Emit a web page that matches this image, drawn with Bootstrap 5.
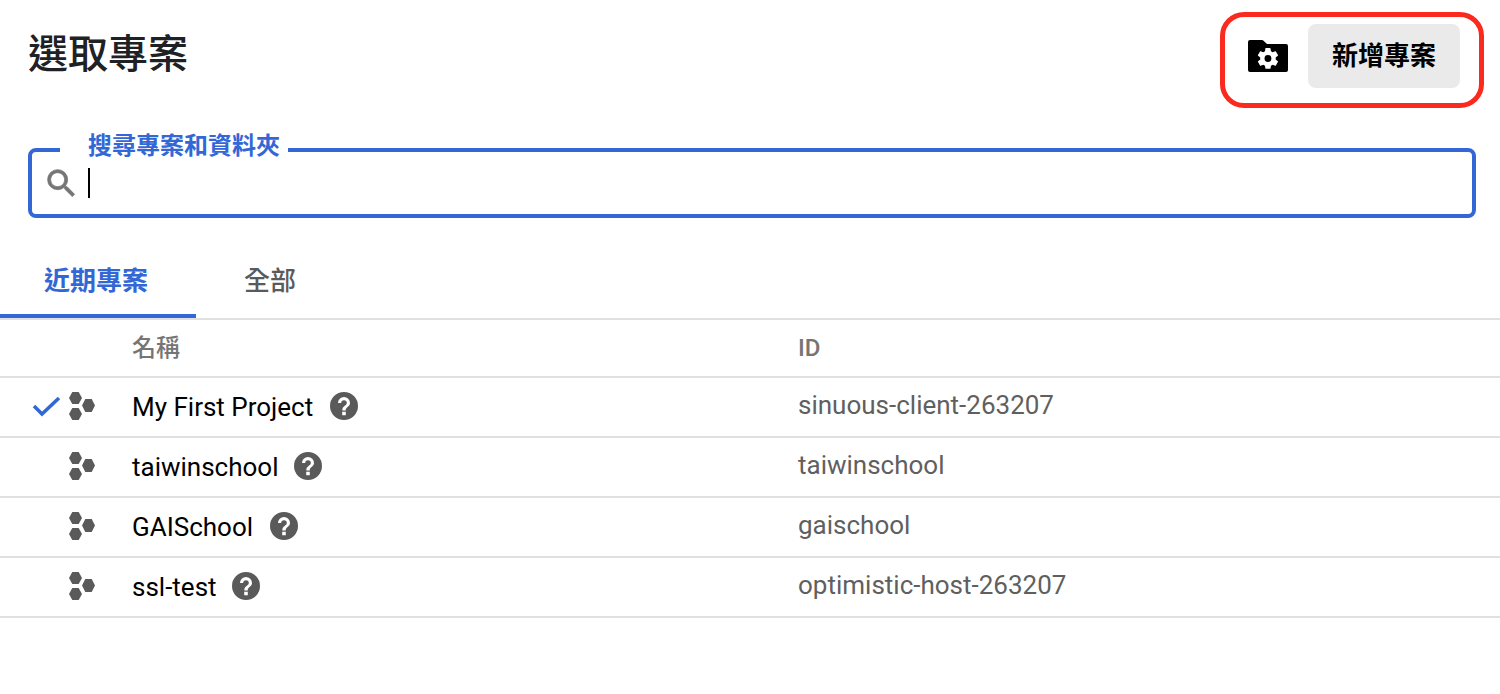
<!DOCTYPE html>
<html lang="zh-Hant">
<head>
<meta charset="utf-8">
<title>選取專案</title>
<link href="https://cdn.jsdelivr.net/npm/bootstrap@5.3.0/dist/css/bootstrap.min.css" rel="stylesheet">
<style>
body{font-family:Roboto,"Noto Sans CJK TC",sans-serif;background:#fff;color:#000;height:694px;overflow:hidden}
.top-bar{padding:24px 40px 0 28px;height:88px}
.pick-title{font-size:40px;font-weight:500;color:#202124;margin:0;line-height:62px}
.tools-wrap{position:relative;gap:20px}
.annot{position:absolute;left:-28px;top:-12px;width:264px;height:96px;border:5px solid #fb2a1f;border-radius:24px;pointer-events:none}
.new-btn{width:152px;height:64px;border-radius:8px;background:#eaeaea;border:0;font-size:26px;font-weight:700;color:#000;padding:0;line-height:1}
.new-btn:hover{background:#e2e2e2;color:#000}
.search-box{position:relative;margin:60px 24px 0 28px;height:70px;border:4px solid #3367d6;border-radius:8px;padding-left:11px;gap:8px}
.search-label{position:absolute;left:28px;top:-22px;background:#fff;padding:0 8px 0 28px;font-size:24px;line-height:32px;font-weight:700;color:#3367d6;height:28px}
.caret-bar{width:2px;height:30px;background:#000}
.tab-strip{margin-top:30px;height:72px;border-bottom:2px solid #e0e0e0}
.tab-item{height:70px;font-size:26px;font-weight:500;color:#5a5a5a;line-height:1}
.tab-on{width:196px;color:#3367d6;font-weight:700;border-bottom:4px solid #3367d6;padding-right:4px}
.tab-off{width:148px;padding-bottom:4px}
.proj-row{height:60px;border-bottom:2px solid #e0e0e0}
.head-row{height:58px;font-size:24px;font-weight:500;color:#757575}
.col-mark{width:132px;padding-left:32px;padding-bottom:2px;flex:none;gap:8px}
.col-name{width:666px;flex:none;font-size:26px;color:#000;gap:17px}
.col-name.tight-gap{gap:15px}
.col-id{font-size:26px;color:#5f5f5f;padding-bottom:3px}
.head-row .col-name,.head-row .col-id{font-size:24px;color:#757575;padding:0}
.mark-slot{width:29px;flex:none}
.help-glyph{margin-bottom:2px}
</style>
</head>
<body>
<div class="top-bar d-flex justify-content-between">
  <h1 class="pick-title">選取專案</h1>
  <div class="tools-wrap d-flex align-items-center align-self-start">
    <svg width="40" height="32" viewBox="0 0 40 32" aria-hidden="true"><path fill="#000" d="M2 0h12a2 2 0 0 1 1.500.7L19 4h19a2 2 0 0 1 2 2v24a2 2 0 0 1-2 2H2a2 2 0 0 1-2-2V2a2 2 0 0 1 2-2z"/><g transform="translate(7 5.500) scale(1.08)"><path fill="#fff" d="M19.140 12.940c.04-.3.06-.61.06-.94 0-.32-.02-.64-.07-.94l2.030-1.580a.49.490 0 0 0 .12-.61l-1.920-3.320a.488.488 0 0 0-.59-.22l-2.390.96c-.5-.38-1.030-.7-1.620-.94l-.36-2.540a.484.484 0 0 0-.48-.41h-3.840c-.24 0-.43.170-.47.410l-.36 2.540c-.59.24-1.130.57-1.620.94l-2.390-.96c-.22-.08-.47 0-.59.22L2.740 8.870c-.12.210-.08.470.12.610l2.030 1.580c-.05.3-.09.630-.09.940s.02.640.07.940l-2.030 1.580a.49.490 0 0 0-.12.610l1.920 3.320c.12.220.37.290.59.220l2.390-.96c.5.38 1.030.7 1.620.94l.36 2.540c.05.240.24.410.48.410h3.840c.24 0 .44-.17.47-.41l.36-2.540c.59-.24 1.130-.56 1.620-.94l2.390.96c.22.080.47 0 .59-.22l1.920-3.320c.12-.22.07-.47-.12-.61l-2.010-1.580zM12 15.200a3.200 3.200 0 1 1 0-6.400 3.200 3.200 0 0 1 0 6.400z"/></g></svg>
    <button type="button" class="btn new-btn">新增專案</button>
    <div class="annot"></div>
  </div>
</div>
<div class="search-box d-flex align-items-center">
  <span class="search-label">搜尋專案和資料夾</span>
  <svg width="37" height="37" viewBox="0 0 24 24" aria-hidden="true"><path fill="#757575" stroke="#757575" stroke-width=".5" d="M15.500 14h-.79l-.28-.27A6.470 6.470 0 0 0 16 9.500 6.500 6.500 0 1 0 9.500 16c1.610 0 3.090-.59 4.230-1.570l.27.28v.79l5 4.990L20.490 19l-4.990-5zm-6 0C7.010 14 5 11.990 5 9.500S7.010 5 9.500 5 14 7.010 14 9.500 11.990 14 9.500 14z"/></svg>
  <span class="caret-bar"></span>
</div>
<div class="tab-strip d-flex">
  <div class="tab-item tab-on d-flex align-items-center justify-content-center">近期專案</div>
  <div class="tab-item tab-off d-flex align-items-center justify-content-center">全部</div>
</div>
<div class="proj-row head-row d-flex align-items-center">
  <div class="col-mark"></div>
  <div class="col-name">名稱</div>
  <div class="col-id">ID</div>
</div>
<svg width="0" height="0" class="d-block" aria-hidden="true"><defs>
  <symbol id="hexes" viewBox="0 0 26 28"><path fill="#5a5a5a" d="M3.300 0h6.400L13 6l-3.300 6H3.300L0 6zM3.300 16h6.400l3.300 6-3.300 6H3.300L0 22zM16.300 7h6.400L26 13.500l-3.300 6.500h-6.400L13 13.500z"/></symbol>
  <symbol id="helpdot" viewBox="0 0 28 28"><path fill="#5a5a5a" fill-rule="evenodd" d="M14 0a14 14 0 1 1 0 28 14 14 0 0 1 0-28zm-1.800 19.800v3.400h3.600v-3.400zM14 5a6 6 0 0 0-6 6h3.200a2.800 2.800 0 1 1 5.600 0c0 2.800-4.500 2.500-4.500 7.400h3.400c0-3.300 4.300-3.900 4.300-7.400A6 6 0 0 0 14 5z"/></symbol>
</defs></svg>
<div class="proj-row d-flex align-items-center">
  <div class="col-mark d-flex align-items-center">
    <svg class="mark-slot" width="29" height="22" viewBox="0 0 29 22" aria-hidden="true"><path fill="none" stroke="#3367d6" stroke-width="3.500" d="M2 11l8 8L27 3"/></svg>
    <svg width="26" height="28" aria-hidden="true"><use href="#hexes"/></svg>
  </div>
  <div class="col-name d-flex align-items-center"><span>My First Project</span><svg class="help-glyph" width="28" height="28" aria-hidden="true"><use href="#helpdot"/></svg></div>
  <div class="col-id">sinuous-client-263207</div>
</div>
<div class="proj-row d-flex align-items-center">
  <div class="col-mark d-flex align-items-center"><span class="mark-slot"></span>
    <svg width="26" height="28" aria-hidden="true"><use href="#hexes"/></svg>
  </div>
  <div class="col-name tight-gap d-flex align-items-center"><span>taiwinschool</span><svg class="help-glyph" width="28" height="28" aria-hidden="true"><use href="#helpdot"/></svg></div>
  <div class="col-id">taiwinschool</div>
</div>
<div class="proj-row d-flex align-items-center">
  <div class="col-mark d-flex align-items-center"><span class="mark-slot"></span>
    <svg width="26" height="28" aria-hidden="true"><use href="#hexes"/></svg>
  </div>
  <div class="col-name d-flex align-items-center"><span>GAISchool</span><svg class="help-glyph" width="28" height="28" aria-hidden="true"><use href="#helpdot"/></svg></div>
  <div class="col-id">gaischool</div>
</div>
<div class="proj-row d-flex align-items-center">
  <div class="col-mark d-flex align-items-center"><span class="mark-slot"></span>
    <svg width="26" height="28" aria-hidden="true"><use href="#hexes"/></svg>
  </div>
  <div class="col-name tight-gap d-flex align-items-center"><span>ssl-test</span><svg class="help-glyph" width="28" height="28" aria-hidden="true"><use href="#helpdot"/></svg></div>
  <div class="col-id">optimistic-host-263207</div>
</div>
<script src="https://cdn.jsdelivr.net/npm/bootstrap@5.3.0/dist/js/bootstrap.bundle.min.js"></script>
</body>
</html>
